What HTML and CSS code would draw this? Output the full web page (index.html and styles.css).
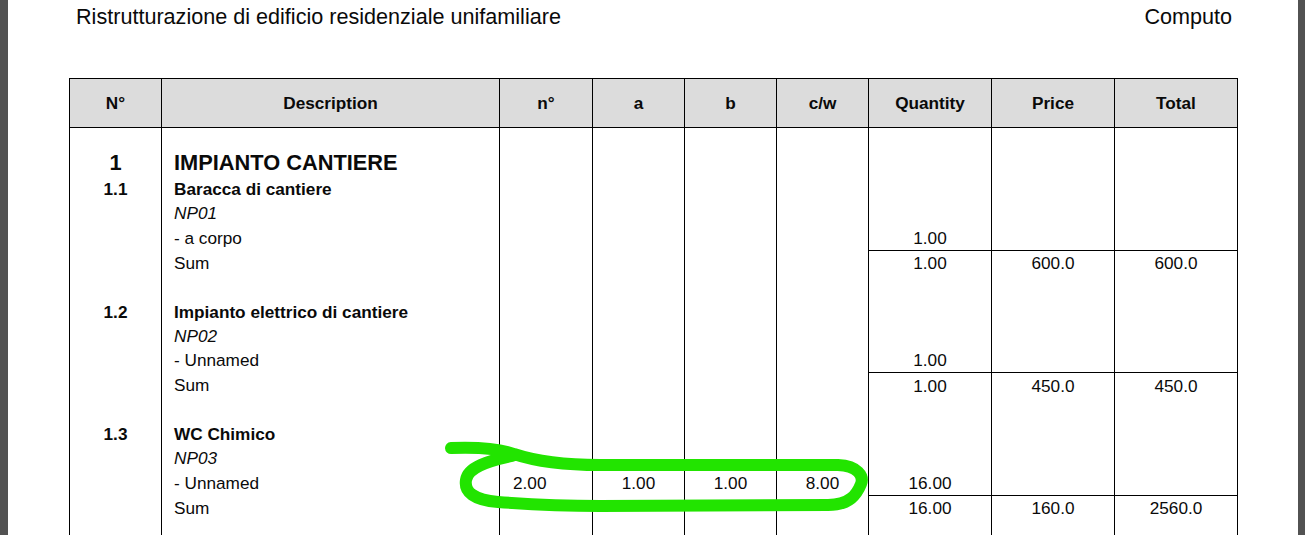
FILE: index.html
```html
<!DOCTYPE html>
<html lang="it">
<head>
<meta charset="utf-8">
<title>Computo</title>
<link rel="stylesheet" href="styles.css">
</head>
<body>
<div class="viewer">
  <div class="side"></div>
  <div class="page">
    <header class="page-head">
      <span class="doc-title">Ristrutturazione di edificio residenziale unifamiliare</span>
      <span class="doc-kind">Computo</span>
    </header>
    <table class="computo">
      <colgroup>
        <col class="c-num"><col class="c-desc"><col class="c-n"><col class="c-a"><col class="c-b"><col class="c-c"><col class="c-q"><col class="c-p"><col class="c-t">
      </colgroup>
      <thead>
        <tr>
          <th>N°</th><th>Description</th><th>n°</th><th>a</th><th>b</th><th>c/w</th><th>Quantity</th><th>Price</th><th>Total</th>
        </tr>
      </thead>
      <tbody>
        <tr class="chapter">
          <td class="num">1</td><td class="desc">IMPIANTO CANTIERE</td><td></td><td></td><td></td><td></td><td></td><td></td><td></td>
        </tr>
        <tr>
          <td class="num">1.1</td><td class="desc item">Baracca di cantiere</td><td></td><td></td><td></td><td></td><td></td><td></td><td></td>
        </tr>
        <tr>
          <td></td><td class="desc code">NP01</td><td></td><td></td><td></td><td></td><td></td><td></td><td></td>
        </tr>
        <tr>
          <td></td><td class="desc">- a corpo</td><td class="n"></td><td></td><td></td><td></td><td class="val">1.00</td><td></td><td></td>
        </tr>
        <tr class="sum">
          <td></td><td class="desc">Sum</td><td></td><td></td><td></td><td></td><td class="val ruled">1.00</td><td class="val ruled">600.0</td><td class="val ruled">600.0</td>
        </tr>
        <tr class="gap"><td></td><td></td><td></td><td></td><td></td><td></td><td></td><td></td><td></td></tr>

        <tr>
          <td class="num">1.2</td><td class="desc item">Impianto elettrico di cantiere</td><td></td><td></td><td></td><td></td><td></td><td></td><td></td>
        </tr>
        <tr>
          <td></td><td class="desc code">NP02</td><td></td><td></td><td></td><td></td><td></td><td></td><td></td>
        </tr>
        <tr>
          <td></td><td class="desc">- Unnamed</td><td class="n"></td><td></td><td></td><td></td><td class="val">1.00</td><td></td><td></td>
        </tr>
        <tr class="sum">
          <td></td><td class="desc">Sum</td><td></td><td></td><td></td><td></td><td class="val ruled">1.00</td><td class="val ruled">450.0</td><td class="val ruled">450.0</td>
        </tr>
        <tr class="gap"><td></td><td></td><td></td><td></td><td></td><td></td><td></td><td></td><td></td></tr>

        <tr>
          <td class="num">1.3</td><td class="desc item">WC Chimico</td><td></td><td></td><td></td><td></td><td></td><td></td><td></td>
        </tr>
        <tr>
          <td></td><td class="desc code">NP03</td><td></td><td></td><td></td><td></td><td></td><td></td><td></td>
        </tr>
        <tr>
          <td></td><td class="desc">- Unnamed</td><td class="n">2.00</td><td class="val">1.00</td><td class="val">1.00</td><td class="val">8.00</td><td class="val">16.00</td><td></td><td></td>
        </tr>
        <tr class="sum">
          <td></td><td class="desc">Sum</td><td></td><td></td><td></td><td></td><td class="val ruled">16.00</td><td class="val ruled">160.0</td><td class="val ruled">2560.0</td>
        </tr>
        <tr class="gap"><td></td><td></td><td></td><td></td><td></td><td></td><td></td><td></td><td></td></tr>
      </tbody>
    </table>
  </div>
  <div class="side"></div>
</div>
<svg class="scribble" width="1305" height="535" viewBox="0 0 1305 535" aria-hidden="true">
  <path d="M451,448 C478,447 498,448 514,454 C538,462 565,465 600,465 L838,465 C858,466 864,476 861,484 C857,494 850,505 828,505 L600,506 C560,506 525,504 498,502 C474,500 464,492 466,480 C468,467 488,461 512,456" />
</svg>
</body>
</html>
```

FILE: styles.css
```css
html, body {
  margin: 0;
  padding: 0;
  background: #ffffff;
}

body {
  font-family: "Liberation Sans", Arial, sans-serif;
  color: #0a0a0a;
  height: 535px;
  overflow: hidden;
  position: relative;
}

.viewer {
  display: flex;
  height: 535px;
}

.side {
  width: 8px;
  flex: 0 0 8px;
  background: #525252;
}

.side:last-child {
  width: 7px;
  flex: 0 0 7px;
}

.page {
  flex: 1;
  background: #ffffff;
  padding-left: 61px;
}

.page-head {
  display: flex;
  justify-content: space-between;
  width: 1156px;
  padding: 5px 0 0 7px;
  height: 73px;
  box-sizing: content-box;
  font-size: 21.6px;
  line-height: 24px;
}

.computo {
  border-collapse: collapse;
  table-layout: fixed;
  width: 1169px;
  font-size: 17.2px;
}

.c-num { width: 92px; }
.c-desc { width: 338px; }
.c-n { width: 93px; }
.c-a, .c-b, .c-c { width: 92px; }
.c-q, .c-p, .c-t { width: 123px; }

.computo th {
  background: #dcdcdc;
  border: 1px solid #000;
  height: 48px;
  padding: 0;
  font-weight: bold;
  font-size: 17.2px;
  text-align: center;
}

.computo td {
  border-left: 1px solid #000;
  border-right: 1px solid #000;
  padding: 0;
  height: 24.3px;
  line-height: 24px;
  text-align: center;
  vertical-align: middle;
  white-space: nowrap;
}

.computo td.desc {
  text-align: left;
  padding-left: 12px;
}

.computo td.num {
  font-weight: bold;
}

.computo td.item {
  font-weight: bold;
}

.computo td.code {
  font-style: italic;
}

.computo td.n {
  text-align: left;
  padding-left: 13px;
}

.computo td.ruled {
  border-top: 1px solid #000;
}

.computo tr.chapter td {
  height: 28px;
  padding-top: 21px;
  line-height: 28px;
  vertical-align: bottom;
}

.computo tr.chapter td.num,
.computo tr.chapter td.desc {
  font-size: 21.8px;
  font-weight: bold;
}

.scribble {
  position: absolute;
  left: 0;
  top: 0;
  pointer-events: none;
}

.scribble path {
  fill: none;
  stroke: #22e400;
  stroke-width: 12;
  stroke-linecap: round;
  stroke-linejoin: round;
}
```
